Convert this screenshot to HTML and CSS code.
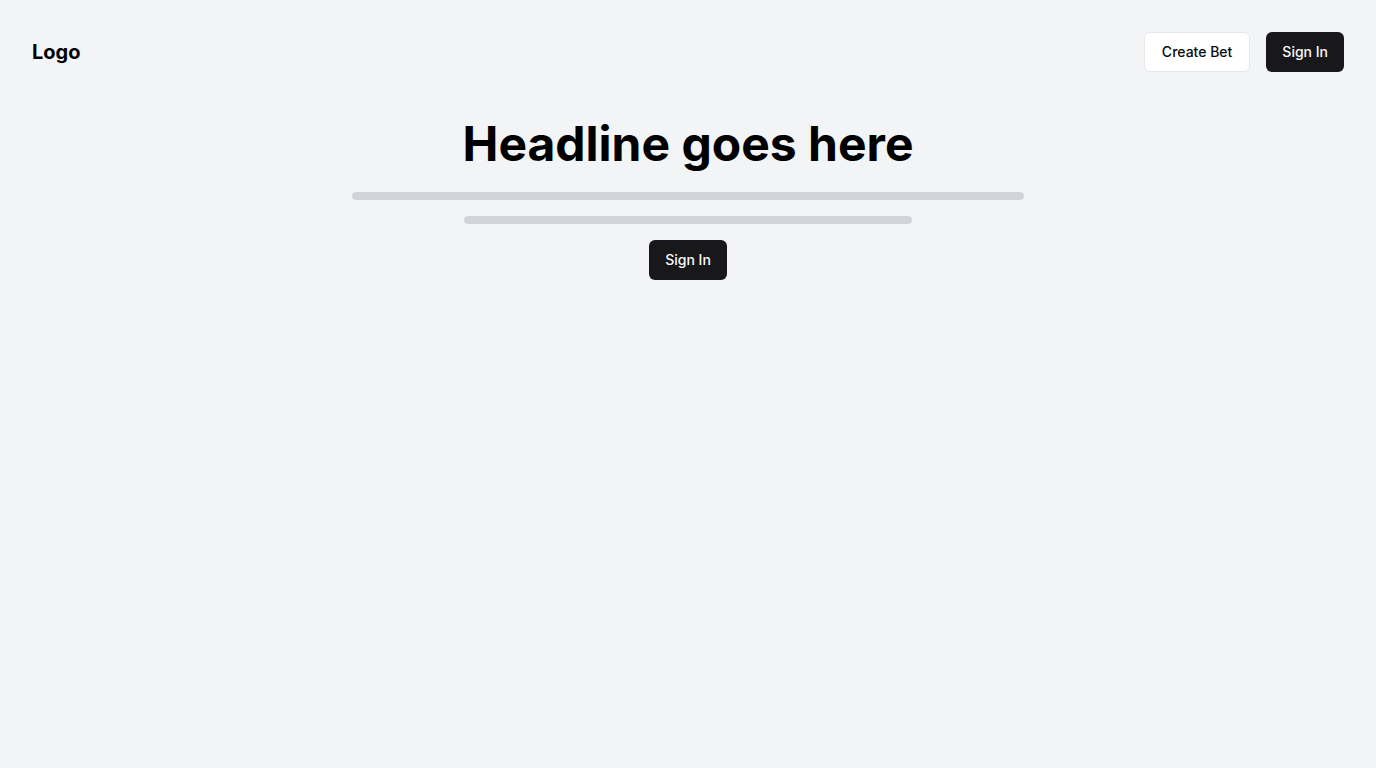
FILE: index.html
```html
<!DOCTYPE html>
<html lang="en">
<head>
<meta charset="utf-8">
<title>Home</title>
<link rel="stylesheet" href="styles.css">
</head>
<body>
<header class="header">
  <div class="logo">Logo</div>
  <nav class="nav">
    <button class="btn btn-outline">Create Bet</button>
    <button class="btn btn-dark">Sign In</button>
  </nav>
</header>
<main class="hero">
  <h1 class="headline">Headline goes here</h1>
  <div class="bar bar-wide"></div>
  <div class="bar bar-narrow"></div>
  <button class="btn btn-dark">Sign In</button>
</main>
</body>
</html>
```
FILE: styles.css
```css
* { box-sizing: border-box; }
html, body { margin: 0; padding: 0; }
body {
  background: #f3f4f6;
  font-family: Inter, "Liberation Sans", sans-serif;
  color: #000;
  min-height: 100vh;
}
.header {
  display: flex;
  align-items: center;
  justify-content: space-between;
  padding: 32px;
}
.logo {
  font-size: 20px;
  font-weight: 700;
  line-height: 28px;
}
.nav {
  display: flex;
  gap: 16px;
}
.btn {
  height: 40px;
  padding: 0 16px;
  border-radius: 6px;
  font-family: inherit;
  font-size: 14px;
  font-weight: 500;
  line-height: 20px;
  cursor: pointer;
}
.btn-outline {
  padding: 0 17px;
  background: #fff;
  border: 1px solid #e5e7eb;
  color: #09090b;
}
.btn-dark {
  background: #18181b;
  border: none;
  color: #fafafa;
}
.hero {
  display: flex;
  flex-direction: column;
  align-items: center;
  gap: 16px;
  padding-top: 16px;
}
.headline {
  margin: 0;
  font-size: 48px;
  font-weight: 700;
  line-height: 1;
}
.bar {
  height: 8px;
  border-radius: 4px;
  background: #d1d5db;
}
.bar-wide { width: 672px; margin-top: 8px; }
.bar-narrow { width: 448px; }
```
